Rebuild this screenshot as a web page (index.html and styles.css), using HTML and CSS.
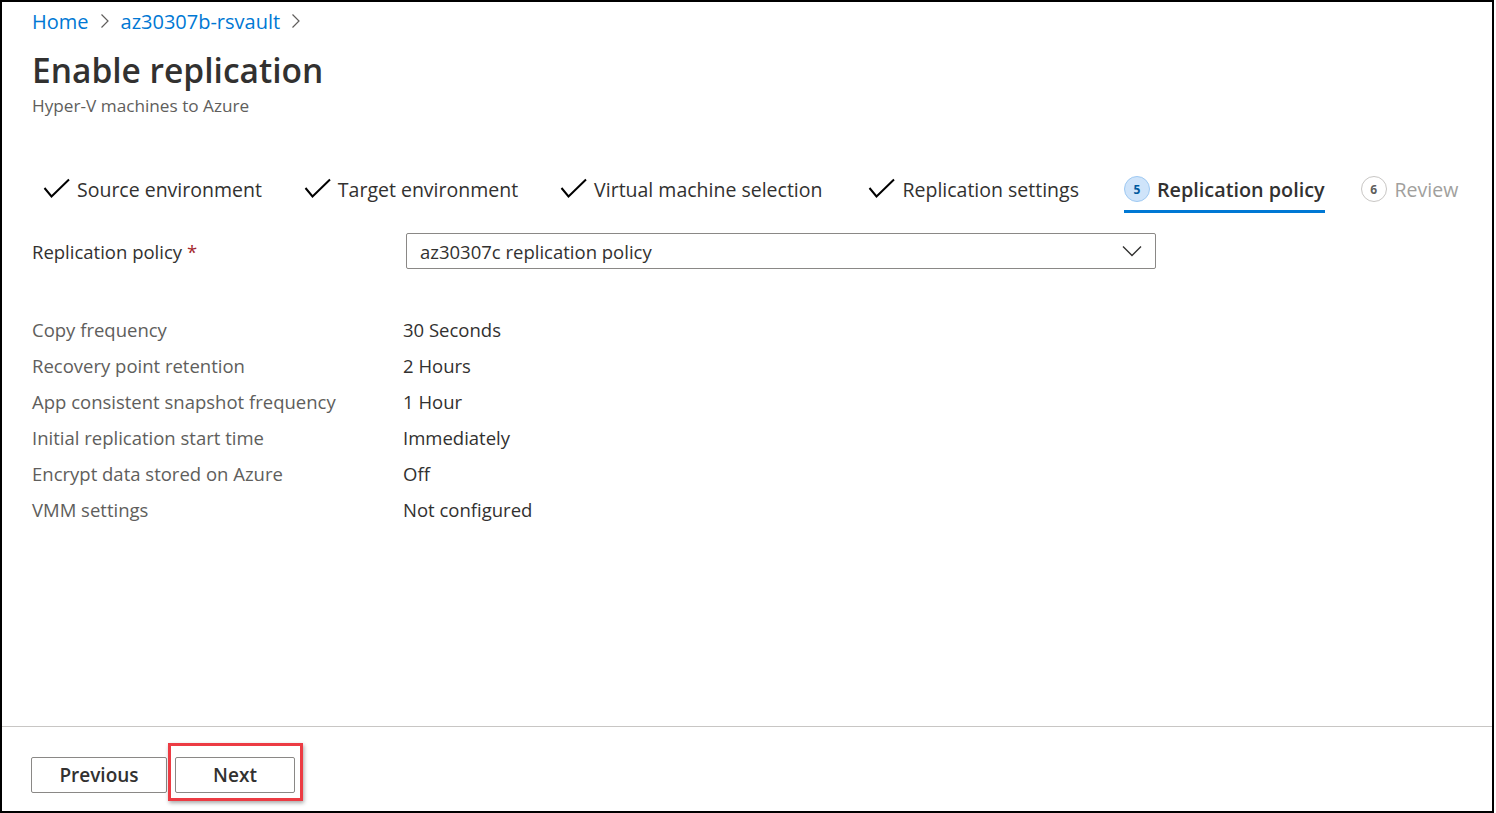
FILE: index.html
```html
<!DOCTYPE html>
<html lang="en">
<head>
<meta charset="utf-8">
<title>Enable replication</title>
<link rel="stylesheet" href="styles.css">
</head>
<body>
<div class="frame">
  <div class="main">
    <nav class="crumbs">
      <a class="crumb">Home</a>
      <svg class="sep" width="10" height="16" viewBox="0 0 10 16"><path d="M1.5 1.5 L8 8 L1.5 14.5" fill="none" stroke="#605e5c" stroke-width="1.2"/></svg>
      <a class="crumb">az30307b-rsvault</a>
      <svg class="sep" width="10" height="16" viewBox="0 0 10 16"><path d="M1.5 1.5 L8 8 L1.5 14.5" fill="none" stroke="#605e5c" stroke-width="1.2"/></svg>
    </nav>
    <h1 class="title">Enable replication</h1>
    <div class="subtitle">Hyper-V machines to Azure</div>

    <div class="tabs">
      <div class="tab done">
        <svg class="check" width="28" height="22" viewBox="0 0 28 22"><path d="M1.5 10 L8.5 18.5 L26 1.5" fill="none" stroke="#000" stroke-width="2"/></svg>
        <span>Source environment</span>
      </div>
      <div class="tab done">
        <svg class="check" width="28" height="22" viewBox="0 0 28 22"><path d="M1.5 10 L8.5 18.5 L26 1.5" fill="none" stroke="#000" stroke-width="2"/></svg>
        <span>Target environment</span>
      </div>
      <div class="tab done">
        <svg class="check" width="28" height="22" viewBox="0 0 28 22"><path d="M1.5 10 L8.5 18.5 L26 1.5" fill="none" stroke="#000" stroke-width="2"/></svg>
        <span>Virtual machine selection</span>
      </div>
      <div class="tab done">
        <svg class="check" width="28" height="22" viewBox="0 0 28 22"><path d="M1.5 10 L8.5 18.5 L26 1.5" fill="none" stroke="#000" stroke-width="2"/></svg>
        <span>Replication settings</span>
      </div>
      <div class="tab active">
        <span class="num">5</span>
        <span>Replication policy</span>
      </div>
      <div class="tab todo">
        <span class="num">6</span>
        <span>Review</span>
      </div>
    </div>

    <div class="field">
      <label class="field-label">Replication policy <span class="req">*</span></label>
      <div class="select">
        <span>az30307c replication policy</span>
        <svg width="20" height="12" viewBox="0 0 20 12"><path d="M1 1.5 L10 10.5 L19 1.5" fill="none" stroke="#323130" stroke-width="1.4"/></svg>
      </div>
    </div>

    <div class="props">
      <div class="k">Copy frequency</div><div class="v">30 Seconds</div>
      <div class="k">Recovery point retention</div><div class="v">2 Hours</div>
      <div class="k">App consistent snapshot frequency</div><div class="v">1 Hour</div>
      <div class="k">Initial replication start time</div><div class="v">Immediately</div>
      <div class="k">Encrypt data stored on Azure</div><div class="v">Off</div>
      <div class="k">VMM settings</div><div class="v">Not configured</div>
    </div>
  </div>

  <footer class="footer">
    <button class="btn prev">Previous</button>
    <div class="highlight">
      <button class="btn next">Next</button>
    </div>
  </footer>
</div>
</body>
</html>
```

FILE: styles.css
```css
* { box-sizing: border-box; }
html, body { margin: 0; padding: 0; background: #fff; }
body {
  font-family: "Open Sans", "Noto Sans", sans-serif;
  color: #323130;
}
.frame {
  width: 1494px;
  height: 813px;
  border: 2px solid #000;
  display: flex;
  flex-direction: column;
}
.main {
  flex: 1;
  padding: 0 0 0 30px;
}
.crumbs {
  display: flex;
  align-items: center;
  height: 38px;
}
.crumb {
  color: #0078d4;
  font-size: 20px;
  text-decoration: none;
}
.sep { margin: 0 11px 0 11px; }
.title {
  margin: 6px 0 0 0;
  font-size: 33.5px;
  font-weight: 600;
  line-height: 48px;
  color: #323130;
}
.subtitle {
  font-size: 17.2px;
  color: #605e5c;
  line-height: 24px;
  margin-top: 0;
}
.tabs {
  display: flex;
  align-items: center;
  margin-top: 45px;
  height: 52px;
  padding-left: 11px;
}
.tab {
  display: flex;
  align-items: center;
  gap: 6px;
  height: 52px;
  font-size: 19.5px;
  color: #323130;
  margin-right: 42px;
  position: relative;
}
.tab.done:nth-child(3) { margin-right: 46px; }
.tab.done:nth-child(4) { margin-right: 45px; }
.tab.active {
  color: #323130;
  font-size: 19.8px;
  font-weight: 600;
  gap: 7px;
  margin-right: 36px;
}
.tab.active::after {
  content: "";
  position: absolute;
  left: 0; right: 0; bottom: 2px;
  height: 3px;
  background: #0078d4;
}
.tab.todo { color: #a19f9d; margin-right: 0; gap: 8px; }
.num {
  width: 26px;
  height: 26px;
  border-radius: 50%;
  display: inline-flex;
  align-items: center;
  justify-content: center;
  font-size: 12px;
  font-weight: 700;
}
.active .num {
  background: #cfe4fa;
  border: 1px solid #9ec9f2;
  color: #005a9e;
}
.todo .num {
  background: #fff;
  border: 1px solid #c8c6c4;
  color: #605e5c;
}
.field {
  display: flex;
  align-items: center;
  margin-top: 18px;
}
.field-label {
  width: 374px;
  font-size: 18.5px;
  color: #323130;
}
.req { color: #a4262c; }
.select {
  width: 750px;
  height: 36px;
  border: 1px solid #8a8886;
  border-radius: 2px;
  display: flex;
  align-items: center;
  justify-content: space-between;
  padding: 0 13px;
  font-size: 18.5px;
  color: #323130;
}
.props {
  display: grid;
  grid-template-columns: 371px auto;
  grid-auto-rows: 36px;
  align-items: center;
  margin-top: 42px;
  font-size: 18.5px;
}
.k { color: #605e5c; }
.v { color: #323130; }
.footer {
  border-top: 1px solid #c8c6c4;
  height: 85px;
  display: flex;
  align-items: flex-start;
  padding: 30px 0 0 29px;
}
.btn {
  font-family: inherit;
  font-size: 19px;
  font-weight: 600;
  color: #323130;
  background: #fff;
  border: 1px solid #8a8886;
  border-radius: 2px;
  height: 36px;
  padding: 0;
}
.prev { width: 136px; }
.highlight {
  margin: -14px 0 0 1px;
  border: 3px solid #ec3b43;
  padding: 11px 5px 5px 4px;
  box-shadow: 1px 2px 4px rgba(0,0,0,0.35);
}
.next { width: 120px; display: block; }
```
